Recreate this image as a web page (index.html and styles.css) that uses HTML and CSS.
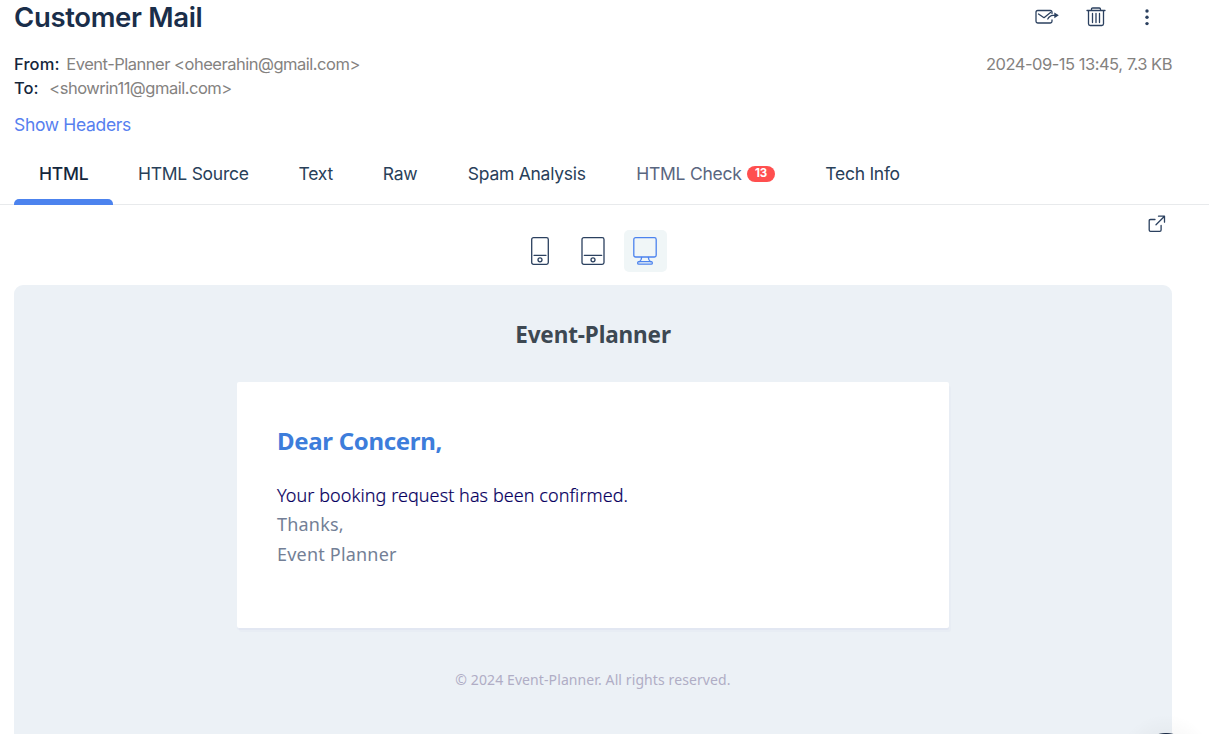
FILE: index.html
```html
<!DOCTYPE html>
<html lang="en">
<head>
<meta charset="utf-8">
<title>Customer Mail</title>
<link rel="stylesheet" href="styles.css">
</head>
<body>
<header class="mail-header">
  <div class="title-row">
    <h1 class="title">Customer Mail</h1>
    <div class="actions">
      <svg class="icon-forward" width="24" height="16" viewBox="0 0 24 16"><path d="M17 4.5V3.2Q17 1.5 15.3 1.5H2.7Q1 1.5 1 3.2V12.3Q1 14 2.7 14H15.3Q17 14 17 12.3V11M3.5 5L9 8.7L15.5 3.5M12.8 10Q14.5 6.5 18 6.3H22"/><path class="solid" d="M19.3 3.5L23.8 6.3L19.3 9.2Z"/></svg>
      <svg class="icon-trash" width="20" height="20" viewBox="0 0 20 20"><path d="M1 3.5H19M5.5 3V2.2Q5.5 1 6.7 1H13.3Q14.5 1 14.5 2.2V3M2.5 4V16.8Q2.5 18.5 4.2 18.5H15.8Q17.5 18.5 17.5 16.8V4M6.5 6.5V15.5M10 6.5V15.5M13.5 6.5V15.5"/></svg>
      <svg class="icon-more" width="4" height="18" viewBox="0 0 4 18"><circle cx="2" cy="3" r="1.7"/><circle cx="2" cy="9.3" r="1.7"/><circle cx="2" cy="15.6" r="1.7"/></svg>
    </div>
  </div>
  <div class="meta">
    <div class="from"><span class="label">From:</span><span class="value">Event-Planner &lt;oheerahin@gmail.com&gt;</span></div>
    <div class="date">2024-09-15 13:45, 7.3 KB</div>
  </div>
  <div class="to"><span class="label">To:</span><span class="value">&lt;showrin11@gmail.com&gt;</span></div>
  <a class="show-headers">Show Headers</a>
</header>
<nav class="tabs">
  <a class="tab active">HTML</a>
  <a class="tab source">HTML Source</a>
  <a class="tab text">Text</a>
  <a class="tab raw">Raw</a>
  <a class="tab spam">Spam Analysis</a>
  <a class="tab check">HTML Check<span class="badge">13</span></a>
  <a class="tab tech">Tech Info</a>
</nav>
<main class="preview">
  <div class="devices">
    <span class="device"><svg width="18" height="28" viewBox="0 0 18 28"><rect x=".7" y=".7" width="16.6" height="26.6" rx="1.8"/><path d="M3 18.3H15"/><circle cx="9" cy="22.8" r="2"/></svg></span>
    <span class="device"><svg width="24" height="28" viewBox="0 0 24 28"><rect x="1" y=".7" width="22" height="26.6" rx="1.8"/><path d="M3.3 18.3H20.7"/><circle cx="12" cy="22.8" r="2"/></svg></span>
    <span class="device selected"><svg width="24" height="28" viewBox="0 0 24 28"><rect x=".8" y=".7" width="22.4" height="19.3" rx="1.8"/><path d="M8.7 20.3Q8.6 23.3 6.2 24.7M15.3 20.3Q15.4 23.3 17.8 24.7"/><rect x="4.7" y="24.7" width="14.6" height="2.5" rx="1"/></svg></span>
    <svg class="external" width="18" height="18" viewBox="0 0 18 18"><path d="M7 4.5H2.5Q1.2 4.5 1.2 5.8V15Q1.2 16.3 2.5 16.3H11.8Q13.1 16.3 13.1 15V10.5M8 9.8L16 1.8M10.5 1.2H16.5V7.2"/></svg>
  </div>
  <section class="canvas">
    <h2 class="brand">Event-Planner</h2>
    <article class="card">
      <h3 class="greeting">Dear Concern,</h3>
      <p class="body-text">Your booking request has been confirmed.</p>
      <p class="sign thanks">Thanks,</p>
      <p class="sign name">Event Planner</p>
    </article>
    <footer class="copyright">© 2024 Event-Planner. All rights reserved.</footer>
  </section>
</main>
<div class="launcher"></div>
</body>
</html>
```
FILE: styles.css
```css
* { box-sizing: border-box; }
body { margin: 0; height: 734px; overflow: hidden; position: relative; background: #fff; font-family: Inter, "Liberation Sans", sans-serif; color: #1a2e4a; }
h1, h2, h3, p { margin: 0; }
svg { fill: none; stroke: #2b405f; stroke-width: 1.3; stroke-linecap: round; stroke-linejoin: round; display: block; flex: none; }
.mail-header { padding: 0 37px 0 14px; height: 143px; }
.title-row { display: flex; justify-content: space-between; height: 34px; align-items: center; }
.title { font-size: 27.5px; line-height: 34px; font-weight: 600; letter-spacing: -.34px; white-space: nowrap; }
.actions { display: flex; align-items: center; padding-right: 23px; }
.icon-trash { margin: 0 39px 0 27.5px; }
.solid { fill: #2b405f; stroke: none; }
.icon-more { fill: #2b405f; stroke: none; }
.meta { display: flex; justify-content: space-between; margin-top: 18px; }
.from, .to, .date { font-size: 16.5px; line-height: 24px; height: 24px; color: #84827f; white-space: nowrap; }
.value, .date { letter-spacing: -.49px; }
.label { color: #14263c; font-weight: 500; display: inline-block; }
.from .label { width: 52.3px; letter-spacing: .1px; }
.to .label { width: 35.3px; }
.show-headers { display: block; margin-top: 12px; font-size: 17.5px; line-height: 26px; letter-spacing: -.33px; color: #5780ef; }
.tabs { display: flex; padding-left: 14px; height: 62px; border-bottom: 1px solid #e8eaec; }
.tab { flex: none; height: 62px; padding: 0 25px; font-size: 17.5px; line-height: 61px; letter-spacing: -.26px; color: #284059; white-space: nowrap; }
.active { width: 99px; color: #14263c; font-weight: 500; position: relative; }
.active::after { content: ""; position: absolute; left: 0; right: 0; bottom: 0; height: 6px; border-radius: 5px 5px 0 0; background: #4c83ee; }
.source { width: 160.6px; }
.text { width: 84.2px; }
.raw { width: 85px; }
.spam { width: 168.5px; }
.check { width: 189px; height: 61px; color: #596680; display: flex; align-items: center; }
.badge { flex: none; margin-left: 5.5px; width: 28px; height: 16px; border-radius: 8px; background: #ff4f4f; color: #fff; font-size: 11.5px; font-weight: 700; line-height: 15px; text-align: center; }
.preview { padding: 0 37px 0 14px; }
.devices { height: 80px; padding-top: 25px; display: flex; justify-content: center; gap: 10px; position: relative; }
.device { width: 43px; height: 42px; border-radius: 5px; display: flex; align-items: center; justify-content: center; }
.device:first-child { margin-left: -1px; }
.selected { background: #f0f6f7; padding-right: 1px; }
.selected svg { stroke: #4c83ee; }
.external { position: absolute; right: 6px; top: 10px; }
.canvas { height: 449px; background: #ecf1f6; border-radius: 9px 9px 0 0; display: flex; flex-direction: column; align-items: center; font-family: "Noto Sans", "Open Sans", sans-serif; }
.brand { margin-top: 34px; font-size: 22.5px; line-height: 32px; letter-spacing: -.13px; font-weight: 700; color: #3d4852; }
.card { margin-top: 31px; width: 712px; height: 246px; flex: none; padding: 43px 40px 0; border-radius: 2px; background: #fff; box-shadow: 0 2px 0 rgba(0,0,150,.025), 2px 4px 0 rgba(0,0,150,.015); }
.greeting { font-size: 24px; line-height: 32px; letter-spacing: -.32px; font-weight: 700; color: #3d7ddb; }
.body-text { margin-top: 23px; font-size: 18px; line-height: 30px; letter-spacing: .075px; color: #080060; font-weight: 300; -webkit-text-stroke: .2px #080060; }
.sign { font-size: 18px; line-height: 29px; letter-spacing: .2px; color: #737f96; }
.name { line-height: 30px; }
.copyright { margin-top: 42px; font-size: 14px; line-height: 20px; letter-spacing: .1px; color: #b0adc5; }
.body-text, .sign, .copyright, .brand, .greeting { white-space: nowrap; }
.launcher { position: absolute; left: 1108px; bottom: 0; width: 101px; height: 44px; background: radial-gradient(circle at 58px 72px, #1e2e48 28.5px, rgba(0,0,0,.025) 29.5px, transparent 48px); }
```
